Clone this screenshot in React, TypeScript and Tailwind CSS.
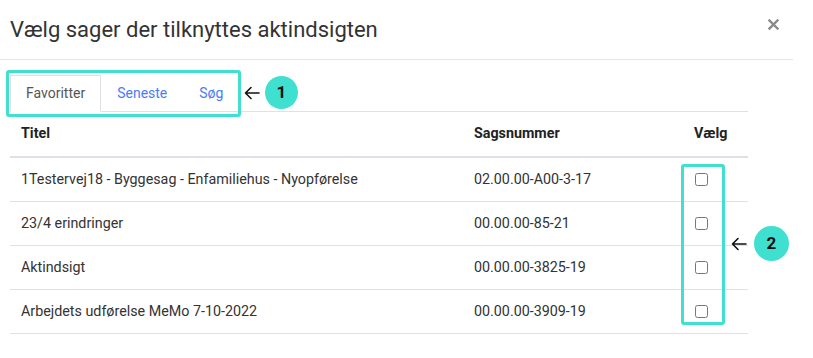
import { useState } from 'react'

type Sag = {
  id: string
  titel: string
  sagsnummer: string
}

const sager: Sag[] = [
  { id: 'a', titel: '1Testervej18 - Byggesag - Enfamiliehus - Nyopførelse', sagsnummer: '02.00.00-A00-3-17' },
  { id: 'b', titel: '23/4 erindringer', sagsnummer: '00.00.00-85-21' },
  { id: 'c', titel: 'Aktindsigt', sagsnummer: '00.00.00-3825-19' },
  { id: 'd', titel: 'Arbejdets udførelse MeMo 7-10-2022', sagsnummer: '00.00.00-3909-19' },
]

function Marker({ n, wide }: { n: string, wide?: boolean }){
  return (
    <div className={wide ? 'flex items-center gap-[7px]' : 'flex items-center gap-[5px]'}>
      <svg width="16" height="14" viewBox="0 0 16 14" fill="none" stroke="#111" strokeWidth="1.6" strokeLinecap="round" strokeLinejoin="round">
        <path d="M15 7H1.5M7 1.5L1.5 7L7 12.5" />
      </svg>
      <div className={(wide ? 'w-[35px] h-[35px]' : 'w-[33px] h-[33px]') + ' rounded-full bg-[#40e0d0] flex items-center justify-center text-[17px] font-bold text-[#111]'}>{n}</div>
    </div>
  )
}

export default function App(){
  const [tab, setTab] = useState('fav')
  const [valgt, setValgt] = useState<Record<string, boolean>>({})

  const tabs = [
    { key: 'fav', label: 'Favoritter' },
    { key: 'sen', label: 'Seneste' },
    { key: 'sog', label: 'Søg' },
  ]

  return (
    <div className="relative w-[813px] h-[358px] bg-white overflow-hidden text-[#333] font-['Roboto',sans-serif]">
      {/* header */}
      <div className="w-[793px] h-[60px] border-b border-[#e5e5e5] flex justify-between pl-[10px]">
        <h2 className="self-center text-[22px] leading-none text-[#333] mt-[1px]">Vælg sager der tilknyttes aktindsigten</h2>
        <button className="mt-[18px] mr-[14px] self-start w-[12px] h-[12px] flex items-center justify-center">
          <svg width="11" height="11" viewBox="0 0 11 11" stroke="#8a8a8a" strokeWidth="2.4" strokeLinecap="square">
            <path d="M1.5 1.5L9.5 9.5M9.5 1.5L1.5 9.5" />
          </svg>
        </button>
      </div>

      <div className="pl-[10px] pt-[15px]">
        {/* tabs */}
        <div className="w-[738px] flex border-b border-[#dee2e6] text-[14px]">
          {tabs.map(t => (
            <button
              key={t.key}
              onClick={() => setTab(t.key)}
              className={t.key === tab
                ? 'h-[37px] px-[15px] mb-[-1px] border border-[#dee2e6] border-b-white bg-white text-[#555]'
                : 'h-[37px] px-[15px] mb-[-1px] border border-transparent text-[#4a7bf7]'}
            >
              {t.label}
            </button>
          ))}
        </div>

        {/* table */}
        <div className="w-[738px] text-[14.3px]">
          <div className="flex h-[46px] items-center border-b-2 border-[#dee2e6] font-bold text-[#222]">
            <div className="w-[453px] px-[11px]">Titel</div>
            <div className="w-[220px] px-[11px]">Sagsnummer</div>
            <div className="flex-1 px-[11px]">Vælg</div>
          </div>
          {sager.map(s => (
            <div key={s.id} className="flex h-[44px] items-center border-b border-[#dee2e6]">
              <div className="w-[453px] px-[11px] truncate">{s.titel}</div>
              <div className="w-[220px] px-[11px]">{s.sagsnummer}</div>
              <div className="flex-1 px-[11px] flex">
                <input
                  type="checkbox"
                  className="m-0 ml-[1px] w-[13px] h-[13px]"
                  checked={!!valgt[s.id]}
                  onChange={e => setValgt({ ...valgt, [s.id]: e.target.checked })}
                />
              </div>
            </div>
          ))}
        </div>
      </div>

      {/* annotations */}
      <div className="absolute left-[6px] top-[70px] w-[235px] h-[47px] border-[3px] border-[#40e0d0] rounded-[3px]" />
      <div className="absolute left-[244px] top-[76px]">
        <Marker n="1" />
      </div>
      <div className="absolute left-[681px] top-[164px] w-[44px] h-[161px] border-[3px] border-[#40e0d0] rounded-[3px]" />
      <div className="absolute left-[731px] top-[226px]">
        <Marker n="2" wide />
      </div>
    </div>
  )
}
